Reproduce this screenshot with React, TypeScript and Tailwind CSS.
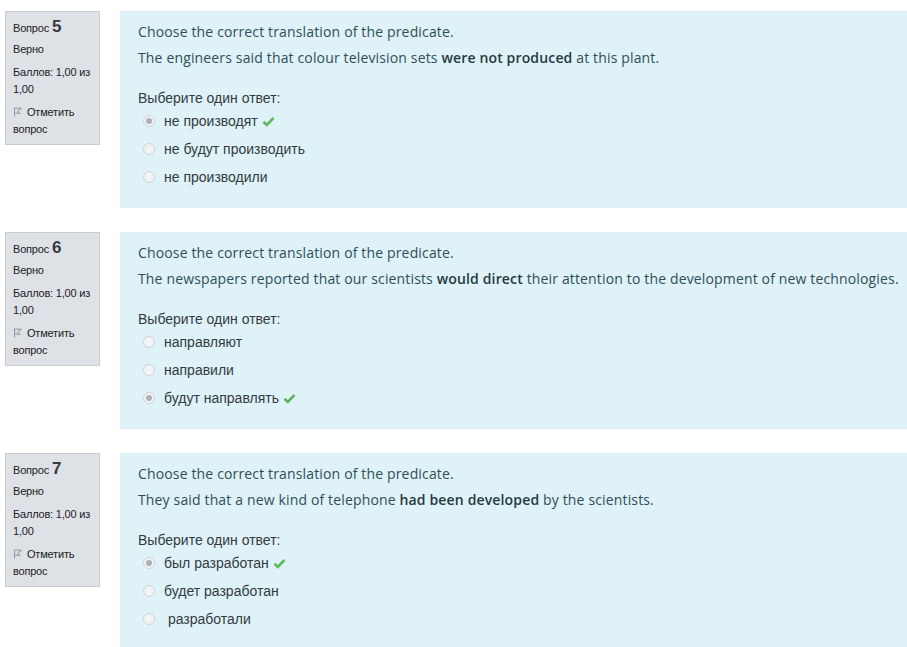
import React from "react";

type Q = {
  num: number;
  before: string;
  bold: string;
  after: string;
  options: string[];
  correct: number;
};

const questions: Q[] = [
  {
    num: 5,
    before: "The engineers said that colour television sets ",
    bold: "were not produced",
    after: " at this plant.",
    options: ["не производят", "не будут производить", "не производили"],
    correct: 0,
  },
  {
    num: 6,
    before: "The newspapers reported that our scientists ",
    bold: "would direct",
    after: " their attention to the development of new technologies.",
    options: ["направляют", "направили", "будут направлять"],
    correct: 2,
  },
  {
    num: 7,
    before: "They said that a new kind of telephone ",
    bold: "had been developed",
    after: " by the scientists.",
    options: ["был разработан", "будет разработан", " разработали"],
    correct: 0,
  },
];

function Check() {
  return (
    <svg width="13" height="11" viewBox="0 0 13 11" className="ml-1 inline-block">
      <path d="M1.5 5.8 L4.8 9 L11.5 2" fill="none" stroke="#5cb85c" strokeWidth="2.6" />
    </svg>
  );
}

function Radio({ checked }: { checked: boolean }) {
  return (
    <span className="w-[12px] h-[12px] rounded-full border border-[#cfd3d7] bg-[#f1f3f4] flex items-center justify-center">
      {checked && <span className="w-[6px] h-[6px] rounded-full bg-[#adb1b5]" />}
    </span>
  );
}

function Question({ q }: { q: Q }) {
  return (
    <div className="flex">
      {/* info box */}
      <div className="w-[95px] h-[134px] ml-[5px] mr-[20px] shrink-0 bg-[#dee2e6] border border-[#c8ccd0] pl-[7px] pr-[2px] pt-[6px] text-[11px] leading-[17px] text-[#1d2125] font-['Liberation_Sans',sans-serif] tracking-[-0.2px]">
        <div className="flex items-baseline gap-[3px]">
          <span>Вопрос</span>
          <span className="text-[17px] font-bold text-[#343a40]">{q.num}</span>
        </div>
        <div className="mt-[4px]">Верно</div>
        <div className="mt-[6px]">Баллов: 1,00 из 1,00</div>
        <div className="mt-[6px]">
          <svg width="10" height="10" viewBox="0 0 10 10" className="inline-block mr-[4px] -mt-[2px]">
            <path d="M1.5 0.8 L1.5 9.5 M1.5 1 L8.5 1.3 L4.6 4 L7 6.5 L1.5 5.8" fill="none" stroke="#8a8f94" strokeWidth="0.9" />
          </svg>
          Отметить вопрос
        </div>
      </div>

      {/* formulation */}
      <div className="flex-1 h-[197px] bg-[#def2f8] pl-[18px] pt-[11px] text-[#2f4f57]">
        <div className="font-['Open_Sans',sans-serif] text-[14px] leading-[20px] tracking-[0.15px]">
          <p>Choose the correct translation of the predicate.</p>
          <p className="mt-[6px]">
            {q.before}
            <b className="font-semibold text-[#253a40]">{q.bold}</b>
            {q.after}
          </p>
        </div>
        <div className="mt-[20px] font-['Liberation_Sans',sans-serif] text-[14px] leading-[20px] text-[#343a40]">
          <div>Выберите один ответ:</div>
          <div className="mt-[3px] flex flex-col gap-[8px]">
            {q.options.map((o, i) => (
              <div key={i} className="flex items-center pl-[5px]">
                <Radio checked={i === q.correct} />
                <span className="ml-[9px] whitespace-pre">{o}</span>
                {i === q.correct && <Check />}
              </div>
            ))}
          </div>
        </div>
      </div>
    </div>
  );
}

export default function App() {
  return (
    <div className="w-[907px] h-[647px] bg-white pt-[11px] flex flex-col gap-[24px] overflow-hidden">
      {questions.map((q) => (
        <Question key={q.num} q={q} />
      ))}
    </div>
  );
}
